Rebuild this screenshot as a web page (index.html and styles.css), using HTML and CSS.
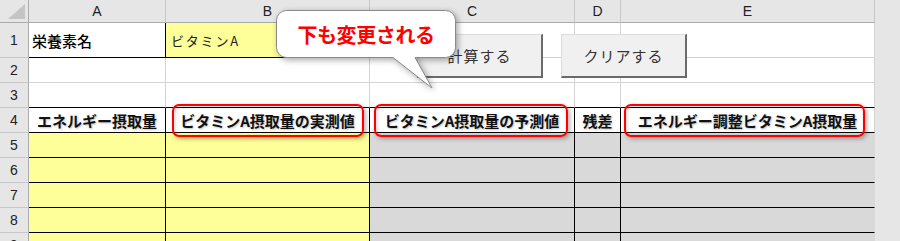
FILE: index.html
```html
<!DOCTYPE html>
<html lang="ja">
<head>
    <meta charset="UTF-8">
    <title>ビタミンA エネルギー調整</title>
    <link rel="stylesheet" href="styles.css">
</head>
<body>
<div class="sheet">
    <div class="grid">
        <!-- 列見出し -->
        <div class="corner"><span class="tri"></span></div>
        <div class="colhead">A</div>
        <div class="colhead">B</div>
        <div class="colhead">C</div>
        <div class="colhead">D</div>
        <div class="colhead">E</div>

        <!-- 1行目 -->
        <div class="rowhead">1</div>
        <div class="cell name line-r line-b">栄養素名</div>
        <div class="cell yellow value line-b">ビタミンA</div>
        <div class="cell"></div>
        <div class="cell"></div>
        <div class="cell"></div>

        <div class="rowhead">2</div>
        <div class="cell"></div>
        <div class="cell"></div>
        <div class="cell"></div>
        <div class="cell"></div>
        <div class="cell"></div>

        <div class="rowhead">3</div>
        <div class="cell line-b"></div>
        <div class="cell line-b"></div>
        <div class="cell line-b"></div>
        <div class="cell line-b"></div>
        <div class="cell line-b"></div>

        <!-- 4行目: 見出し -->
        <div class="rowhead">4</div>
        <div class="cell hdr line-r line-b">エネルギー摂取量</div>
        <div class="cell hdr line-r line-b">ビタミンA摂取量の実測値</div>
        <div class="cell hdr line-r line-b">ビタミンA摂取量の予測値</div>
        <div class="cell hdr line-r line-b">残差</div>
        <div class="cell hdr line-b">エネルギー調整ビタミンA摂取量</div>

        <div class="rowhead">5</div>
        <div class="cell yellow line-r line-b"></div>
        <div class="cell yellow line-r line-b"></div>
        <div class="cell gray line-r line-b"></div>
        <div class="cell gray line-r line-b"></div>
        <div class="cell gray line-b"></div>

        <div class="rowhead">6</div>
        <div class="cell yellow line-r line-b"></div>
        <div class="cell yellow line-r line-b"></div>
        <div class="cell gray line-r line-b"></div>
        <div class="cell gray line-r line-b"></div>
        <div class="cell gray line-b"></div>

        <div class="rowhead">7</div>
        <div class="cell yellow line-r line-b"></div>
        <div class="cell yellow line-r line-b"></div>
        <div class="cell gray line-r line-b"></div>
        <div class="cell gray line-r line-b"></div>
        <div class="cell gray line-b"></div>

        <div class="rowhead">8</div>
        <div class="cell yellow line-r line-b"></div>
        <div class="cell yellow line-r line-b"></div>
        <div class="cell gray line-r line-b"></div>
        <div class="cell gray line-r line-b"></div>
        <div class="cell gray line-b"></div>

        <div class="rowhead">9</div>
        <div class="cell yellow line-r line-b"></div>
        <div class="cell yellow line-r line-b"></div>
        <div class="cell gray line-r line-b"></div>
        <div class="cell gray line-r line-b"></div>
        <div class="cell gray line-b"></div>
    </div>

    <!-- シート上のボタン -->
    <button class="btn btn-calc">計算する</button>
    <button class="btn btn-clear">クリアする</button>

    <!-- 吹き出し -->
    <svg class="balloon" width="200" height="92" viewBox="0 0 200 92">
        <path d="M16.5,6.5 H175.5 A10,10 0 0 1 185.5,16.5 V43.5 A10,10 0 0 1 175.5,53.5 H145 L162,84 L123,53.5 H16.5 A10,10 0 0 1 6.5,43.5 V16.5 A10,10 0 0 1 16.5,6.5 Z"
              fill="#fff" stroke="#8a8a8a" stroke-width="1"/>
    </svg>
    <div class="balloon-text">下も変更される</div>

    <!-- 赤枠 -->
    <div class="mark mark-b"></div>
    <div class="mark mark-c"></div>
    <div class="mark mark-e"></div>
</div>
</body>
</html>
```

FILE: styles.css
```css
body {
    margin: 0;
    background: #e6e6e6;
    font-family: "Noto Sans CJK JP", "Liberation Sans", sans-serif;
    overflow: hidden;
}

.sheet {
    position: relative;
    width: 900px;
    height: 241px;
}

.grid {
    display: grid;
    width: 875px;
    grid-template-columns: 29px 137px 204px 205px 46px 254px;
    grid-template-rows: 23px 35px 25px 25px 25px 25px 25px 25px 25px 25px;
}

.grid > div {
    box-sizing: border-box;
}

.corner {
    position: relative;
    background: #e6e6e6;
    border-right: 1px solid #ababab;
    border-bottom: 1px solid #ababab;
}

/* 左上の三角 */
.tri {
    position: absolute;
    right: 3px;
    bottom: 3px;
    width: 0;
    height: 0;
    border-left: 17px solid transparent;
    border-bottom: 15px solid #c4c4c4;
}

.colhead {
    background: #e6e6e6;
    border-right: 1px solid #c8c8c8;
    border-bottom: 1px solid #ababab;
    display: flex;
    align-items: center;
    justify-content: center;
    font-family: "Liberation Sans", sans-serif;
    font-size: 14px;
    color: #222;
}

.rowhead {
    background: #e6e6e6;
    border-right: 1px solid #ababab;
    border-bottom: 1px solid #c8c8c8;
    display: flex;
    align-items: center;
    justify-content: center;
    font-family: "Liberation Sans", sans-serif;
    font-size: 14px;
    color: #222;
}

.cell {
    background: #fff;
    border-right: 1px solid #d4d4d4;
    border-bottom: 1px solid #d4d4d4;
    display: flex;
    align-items: center;
    overflow: hidden;
    white-space: nowrap;
}

.yellow {
    background: #ffff99;
}

.gray {
    background: #d9d9d9;
    border-right-color: #d9d9d9;
}

.line-r {
    border-right-color: #000;
}

.line-b {
    border-bottom-color: #000;
}

.name {
    padding-left: 3px;
    font-size: 15px;
    font-weight: 500;
    color: #000;
}

.value {
    padding-left: 5px;
    font-size: 13px;
    letter-spacing: 1.8px;
    color: #222;
}

.hdr {
    justify-content: center;
    font-size: 15px;
    font-weight: 700;
    color: #111;
    text-shadow: 1px 1px 2px rgba(0, 0, 0, .25);
}

/* ボタン */
.btn {
    position: absolute;
    top: 34px;
    width: 126px;
    height: 44px;
    box-sizing: border-box;
    background: #f0f0f0;
    border: 1px solid #dcdcdc;
    border-right: 2px solid #6a6a6a;
    border-bottom: 2px solid #6a6a6a;
    font-family: "Noto Sans CJK JP", sans-serif;
    font-size: 15px;
    letter-spacing: 1px;
    color: #333;
    padding: 0;
}

.btn-calc {
    left: 417px;
}

.btn-clear {
    left: 561px;
}

/* 吹き出し */
.balloon {
    position: absolute;
    left: 270px;
    top: 4px;
    filter: drop-shadow(2px 2px 3px rgba(0, 0, 0, .35));
}

.balloon-text {
    position: absolute;
    left: 276px;
    top: 10px;
    width: 180px;
    height: 48px;
    display: flex;
    align-items: center;
    justify-content: center;
    font-size: 20px;
    font-weight: 700;
    letter-spacing: -0.4px;
    color: #ff0000;
}

/* 赤い角丸枠 */
.mark {
    position: absolute;
    top: 104px;
    height: 33px;
    box-sizing: border-box;
    border: 2px solid #f00;
    border-radius: 7px;
    box-shadow: 2px 2px 4px rgba(0, 0, 0, .3), inset 1px 1px 4px rgba(0, 0, 0, .18);
}

.mark-b {
    left: 172px;
    width: 192px;
}

.mark-c {
    left: 374px;
    width: 194px;
}

.mark-e {
    left: 624px;
    width: 241px;
}
```
